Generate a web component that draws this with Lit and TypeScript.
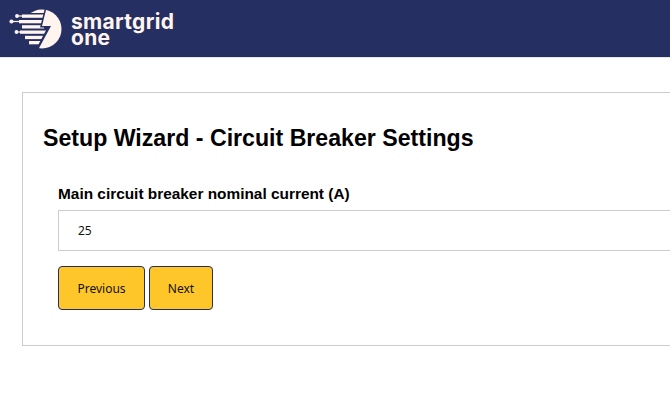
import { LitElement, html, css, svg } from "lit";
import { customElement } from "lit/decorators.js";

const stripes = [
  { y: 14.5, x: 22, w: 25 },
  { y: 20, x: 19, w: 27 },
  { y: 25.2, x: 22, w: 22 },
  { y: 30.5, x: 20, w: 26 },
  { y: 35.8, x: 25, w: 20 },
  { y: 41, x: 29, w: 12 },
];

@customElement("app-root")
export class AppRoot extends LitElement {
  static styles = css`
    :host { display: block; width: 670px; height: 401px; overflow: hidden; background: #fff; font-family: "Liberation Sans", Arial, sans-serif; color: #000; }
    .topbar { height: 57px; background: #262f61; display: flex; align-items: center; gap: 8px; padding: 0 0 0 8px; border-bottom: 1px solid #e6e6e6; }
    .logo-mark { width: 55px; height: 57px; flex: none; display: block; }
    .brand { color: #fff5ee; font-family: Inter, "Open Sans", sans-serif; font-weight: 700; font-size: 21px; line-height: 16px; letter-spacing: 0.3px; margin-top: 2px; }
    .main { padding: 34px 0 0 22px; }
    .card { width: 720px; height: 254px; box-sizing: border-box; border: 1px solid #ccc; padding: 32px 0 0 20px; }
    h1 { margin: 0; font-size: 23.15px; line-height: 26px; font-weight: 700; }
    .field { margin: 34px 0 0 15px; }
    label { display: block; font-size: 15.4px; font-weight: 700; line-height: 18px; margin-bottom: 7px; }
    .input { height: 41px; box-sizing: border-box; border: 1px solid #ccc; display: flex; align-items: center; padding-left: 19px; font-family: "Noto Sans", sans-serif; font-size: 12px; color: #111; }
    .actions { display: flex; gap: 4px; margin-top: 15px; }
    button { height: 44px; box-sizing: border-box; background: #ffc629; border: 1px solid #262f61; border-radius: 4px; padding: 0; font-family: "Noto Sans", sans-serif; font-size: 12px; color: #111; }
    .prev { width: 87px; }
    .next { width: 64px; }
  `;

  render() {
    return html`
      <header class="topbar">
        <svg class="logo-mark" viewBox="8 0 55 57" aria-hidden="true">
          <defs>
            <clipPath id="disc"><circle cx="42" cy="29" r="19.500"></circle></clipPath>
            <clipPath id="left"><path d="M10 0 H47 L40 27.500 H47.500 L35.500 50 H10 Z"></path></clipPath>
          </defs>
          <path clip-path="url(#disc)" fill="#fff5ee" d="M46.500 8 L42 26 H51 L38 50 H64 V8 Z"></path>
          <g clip-path="url(#left)" fill="#fff5ee">
            ${stripes.map((s) => svg`<rect x=${s.x} y=${s.y} width=${s.w} height="3.300"></rect>`)}
          </g>
          <g clip-path="url(#left)"><path clip-path="url(#disc)" fill="#fff5ee" d="M24 8 H48 V13 H24 Z"></path></g>
          <g stroke="#fff5ee" stroke-width="1.200" fill="#fff5ee">
            <path d="M12 21.500 H20"></path>
            <path d="M17 16 H23"></path>
            <path d="M17 32 H21"></path>
            <circle cx="11.500" cy="21.500" r="1.500"></circle>
            <circle cx="17" cy="16" r="1.300"></circle>
            <circle cx="16.500" cy="32" r="1.300"></circle>
          </g>
        </svg>
        <div class="brand"><div>smartgrid</div><div>one</div></div>
      </header>
      <main class="main">
        <section class="card">
          <h1>Setup Wizard - Circuit Breaker Settings</h1>
          <div class="field">
            <label>Main circuit breaker nominal current (A)</label>
            <div class="input">25</div>
            <div class="actions">
              <button class="prev">Previous</button>
              <button class="next">Next</button>
            </div>
          </div>
        </section>
      </main>
    `;
  }
}
